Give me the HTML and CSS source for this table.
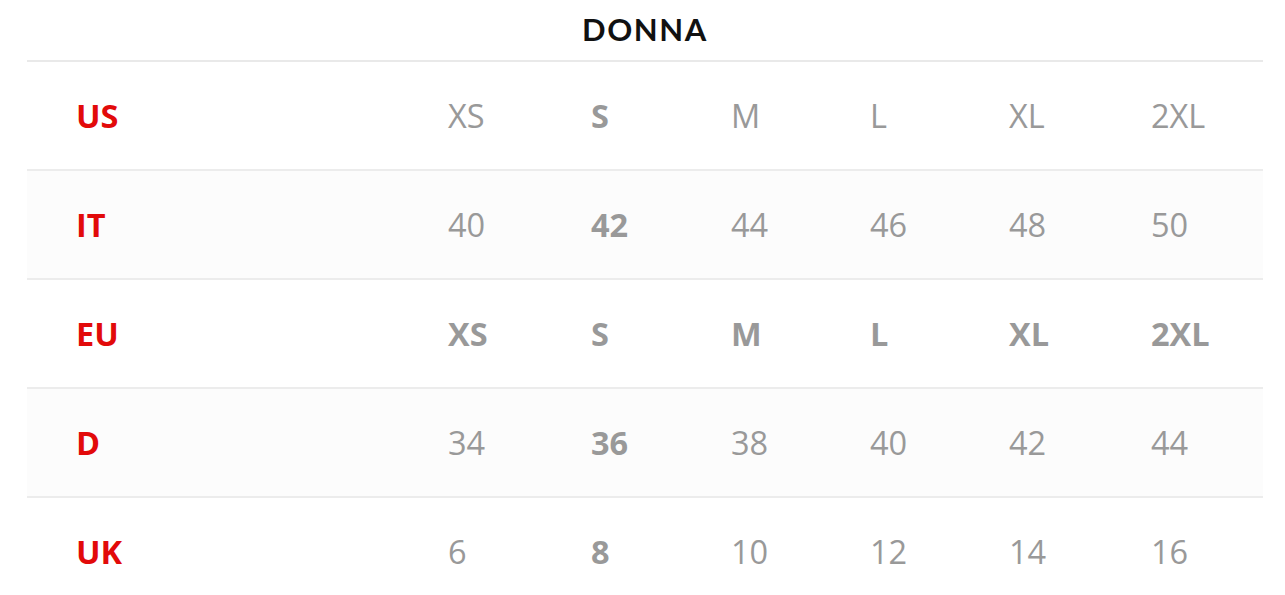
FILE: index.html
```html
<!DOCTYPE html>
<html lang="it">
<head>
<meta charset="utf-8">
<title>Tabella taglie Donna</title>
<link rel="stylesheet" href="styles.css">
</head>
<body>
<div class="chart">
  <h2 class="title">DONNA</h2>
  <div class="table">
    <div class="row">
      <div class="label">US</div>
      <div class="cell">XS</div><div class="cell b">S</div><div class="cell">M</div><div class="cell">L</div><div class="cell">XL</div><div class="cell">2XL</div>
    </div>
    <div class="row alt">
      <div class="label">IT</div>
      <div class="cell">40</div><div class="cell b">42</div><div class="cell">44</div><div class="cell">46</div><div class="cell">48</div><div class="cell">50</div>
    </div>
    <div class="row">
      <div class="label">EU</div>
      <div class="cell b">XS</div><div class="cell b">S</div><div class="cell b">M</div><div class="cell b">L</div><div class="cell b">XL</div><div class="cell b">2XL</div>
    </div>
    <div class="row alt">
      <div class="label">D</div>
      <div class="cell">34</div><div class="cell b">36</div><div class="cell">38</div><div class="cell">40</div><div class="cell">42</div><div class="cell">44</div>
    </div>
    <div class="row">
      <div class="label">UK</div>
      <div class="cell">6</div><div class="cell b">8</div><div class="cell">10</div><div class="cell">12</div><div class="cell">14</div><div class="cell">16</div>
    </div>
  </div>
</div>
</body>
</html>
```
FILE: styles.css
```css
html, body {
  margin: 0;
  padding: 0;
  background: #ffffff;
}
body {
  font-family: "Open Sans", "Liberation Sans", sans-serif;
}
.chart {
  margin-left: 27px;
  width: 1236px;
}
.title {
  margin: 0;
  height: 60px;
  display: flex;
  align-items: center;
  justify-content: center;
  padding-bottom: 2px;
  box-sizing: border-box;
  font-family: "Lato", "Open Sans", sans-serif;
  font-weight: 700;
  font-size: 31px;
  letter-spacing: 1.6px;
  color: #111111;
}
.table {
  border-top: 2px solid #e9e9e9;
}
.row {
  display: grid;
  grid-template-columns: 421px 143px 140px 139px 139px 142px 1fr;
  align-items: center;
  height: 107px;
  border-bottom: 2px solid #ececec;
  font-size: 32.5px;
}
.row:last-child {
  border-bottom: none;
}
.row.alt {
  background: #fcfcfc;
}
.label {
  padding-left: 49px;
  font-weight: 700;
  color: #e20a0a;
}
.cell {
  color: #999999;
  font-weight: 400;
}
.cell.b {
  font-weight: 700;
}
```
